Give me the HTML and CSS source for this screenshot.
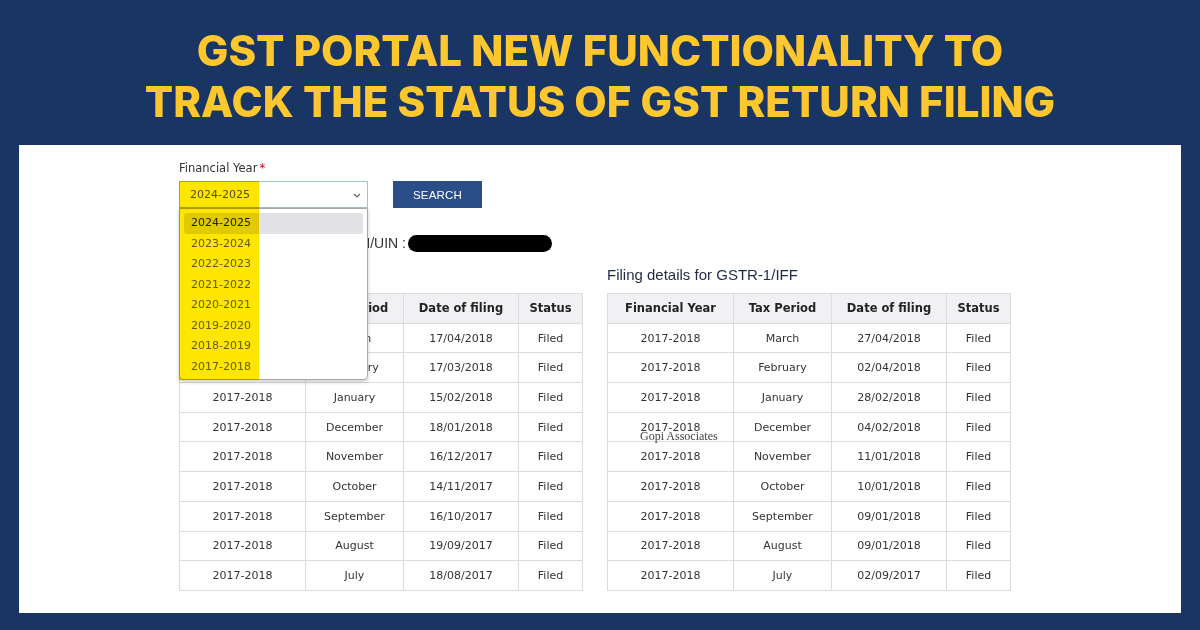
FILE: index.html
```html
<!DOCTYPE html>
<html lang="en">
<head>
  <meta charset="UTF-8"/>
  <title>Track GST Return Filing Status</title>
  <link rel="stylesheet" href="styles.css">
</head>
<body>
  <header class="banner">
    <h1 class="banner-title">GST PORTAL NEW FUNCTIONALITY TO<br>TRACK THE STATUS OF GST RETURN FILING</h1>
  </header>

  <main class="panel">
    <div class="form-block">
      <label class="field-label">Financial Year<span class="req">*</span></label>
      <div class="form-row">
        <div class="select-wrap">
          <div class="select-box">
            <span>2024-2025</span>
            <svg class="chev" width="8" height="5" viewBox="0 0 8 5"><path d="M1 1l3 3 3-3" fill="none" stroke="#666" stroke-width="1.2"/></svg>
          </div>
          <!-- open option list -->
          <ul class="dropdown">
            <li class="active">2024-2025</li>
            <li>2023-2024</li>
            <li>2022-2023</li>
            <li>2021-2022</li>
            <li>2020-2021</li>
            <li>2019-2020</li>
            <li>2018-2019</li>
            <li>2017-2018</li>
          </ul>
          <div class="marker"></div>
        </div>
        <button class="search-btn">SEARCH</button>
      </div>
    </div>

    <div class="gstin-row">
      <span class="gstin-label">GSTIN/UIN :</span>
      <span class="redacted"></span>
    </div>

    <div class="tables">
      <section class="filing">
        <h2 class="filing-title">Filing details for GSTR-3B</h2>
        <table class="filing-table">
          <thead>
            <tr><th>Financial Year</th><th>Tax Period</th><th>Date of filing</th><th>Status</th></tr>
          </thead>
          <tbody>
            <tr><td>2017-2018</td><td>March</td><td>17/04/2018</td><td>Filed</td></tr>
            <tr><td>2017-2018</td><td>February</td><td>17/03/2018</td><td>Filed</td></tr>
            <tr><td>2017-2018</td><td>January</td><td>15/02/2018</td><td>Filed</td></tr>
            <tr><td>2017-2018</td><td>December</td><td>18/01/2018</td><td>Filed</td></tr>
            <tr><td>2017-2018</td><td>November</td><td>16/12/2017</td><td>Filed</td></tr>
            <tr><td>2017-2018</td><td>October</td><td>14/11/2017</td><td>Filed</td></tr>
            <tr><td>2017-2018</td><td>September</td><td>16/10/2017</td><td>Filed</td></tr>
            <tr><td>2017-2018</td><td>August</td><td>19/09/2017</td><td>Filed</td></tr>
            <tr><td>2017-2018</td><td>July</td><td>18/08/2017</td><td>Filed</td></tr>
          </tbody>
        </table>
      </section>

      <section class="filing">
        <h2 class="filing-title">Filing details for GSTR-1/IFF</h2>
        <table class="filing-table">
          <thead>
            <tr><th>Financial Year</th><th>Tax Period</th><th>Date of filing</th><th>Status</th></tr>
          </thead>
          <tbody>
            <tr><td>2017-2018</td><td>March</td><td>27/04/2018</td><td>Filed</td></tr>
            <tr><td>2017-2018</td><td>February</td><td>02/04/2018</td><td>Filed</td></tr>
            <tr><td>2017-2018</td><td>January</td><td>28/02/2018</td><td>Filed</td></tr>
            <tr><td>2017-2018</td><td>December</td><td>04/02/2018</td><td>Filed</td></tr>
            <tr><td>2017-2018</td><td>November</td><td>11/01/2018</td><td>Filed</td></tr>
            <tr><td>2017-2018</td><td>October</td><td>10/01/2018</td><td>Filed</td></tr>
            <tr><td>2017-2018</td><td>September</td><td>09/01/2018</td><td>Filed</td></tr>
            <tr><td>2017-2018</td><td>August</td><td>09/01/2018</td><td>Filed</td></tr>
            <tr><td>2017-2018</td><td>July</td><td>02/09/2017</td><td>Filed</td></tr>
          </tbody>
        </table>
      </section>
    </div>

    <div class="watermark">Gopi Associates</div>
  </main>
</body>
</html>
```

FILE: styles.css
```css
*, *::before, *::after {
  box-sizing: border-box;
}
body {
  margin: 0;
  padding: 0;
  width: 1200px;
  height: 630px;
  overflow: hidden;
  background: #193563;
  font-family: 'DejaVu Sans', Verdana, sans-serif;
  color: #333;
}

/* Title banner */
.banner {
  height: 145px;
  padding-top: 25px;
}
.banner-title {
  margin: 0;
  text-align: center;
  font-family: 'Inter', 'DejaVu Sans', sans-serif;
  font-weight: 800;
  font-size: 42px;
  line-height: 51px;
  color: #fec72e;
}

/* White content panel */
.panel {
  position: relative;
  margin: 0 19px;
  height: 468px;
  background: #fff;
  padding: 16px 160px 0;
}

.field-label {
  display: block;
  font-size: 11.5px;
  line-height: 14px;
  color: #333;
  margin-bottom: 6px;
}
.req {
  color: #d0021b;
  margin-left: 2px;
}

.form-row {
  display: flex;
  gap: 25px;
}
.select-wrap {
  position: relative;
  width: 189px;
}
.select-box {
  height: 27px;
  border: 1px solid #9cc1e6;
  display: flex;
  align-items: center;
  justify-content: space-between;
  padding: 0 6px 0 10px;
  font-size: 11px;
  color: #555;
}
.chev {
  margin-top: 1px;
}

.dropdown {
  position: absolute;
  top: 27px;
  left: 0;
  width: 189px;
  height: 172px;
  margin: 0;
  padding: 4px 4px;
  list-style: none;
  background: #fff;
  border: 1px solid #a9a9a9;
  border-radius: 0 0 4px 4px;
  box-shadow: 0 2px 4px rgba(0,0,0,0.2);
  z-index: 5;
}
.dropdown li {
  height: 20.5px;
  line-height: 20px;
  padding-left: 7px;
  font-size: 11px;
  color: #666;
  border-radius: 3px;
}
.dropdown li.active {
  background: #e1e1e6;
  color: #222;
}

/* highlighter stroke over the year column */
.marker {
  position: absolute;
  top: 0;
  left: 0;
  width: 80px;
  height: 199px;
  background: #ffe600;
  mix-blend-mode: multiply;
  z-index: 6;
}

.search-btn {
  width: 89px;
  height: 27px;
  border: none;
  background: #2c4e88;
  color: #fff;
  font-family: 'Liberation Sans', Arial, sans-serif;
  font-size: 11.5px;
  letter-spacing: 0.2px;
}

.gstin-row {
  display: flex;
  align-items: center;
  gap: 2px;
  margin-top: 26px;
  height: 18px;
}
.gstin-label {
  width: 227px;
  text-align: right;
  font-family: 'Liberation Sans', Arial, sans-serif;
  font-size: 14px;
  color: #333;
}
.redacted {
  width: 144px;
  height: 17px;
  background: #000;
  border-radius: 9px;
}

.tables {
  display: flex;
  gap: 24px;
  margin-top: 15px;
}
.filing-title {
  margin: 0 0 10px;
  font-family: 'Liberation Sans', Arial, sans-serif;
  font-weight: normal;
  font-size: 15px;
  line-height: 16px;
  color: #1f2a44;
}
.filing-table {
  border-collapse: collapse;
  width: 403px;
  table-layout: fixed;
}
.filing-table th,
.filing-table td {
  border: 1px solid #dcdcdc;
  text-align: center;
  padding: 0;
  height: 29.7px;
}
.filing-table th {
  background: #f1f1f3;
  font-weight: bold;
  font-size: 11.5px;
  color: #222;
}
.filing-table td {
  font-size: 11px;
  color: #333;
}
.filing-table th:nth-child(1) { width: 126px; }
.filing-table th:nth-child(2) { width: 98px; }
.filing-table th:nth-child(3) { width: 115px; }
.filing-table th:nth-child(4) { width: 64px; }

.watermark {
  position: absolute;
  left: 621px;
  top: 284px;
  font-family: 'Liberation Serif', 'Times New Roman', serif;
  font-size: 12px;
  color: #444;
}
```
